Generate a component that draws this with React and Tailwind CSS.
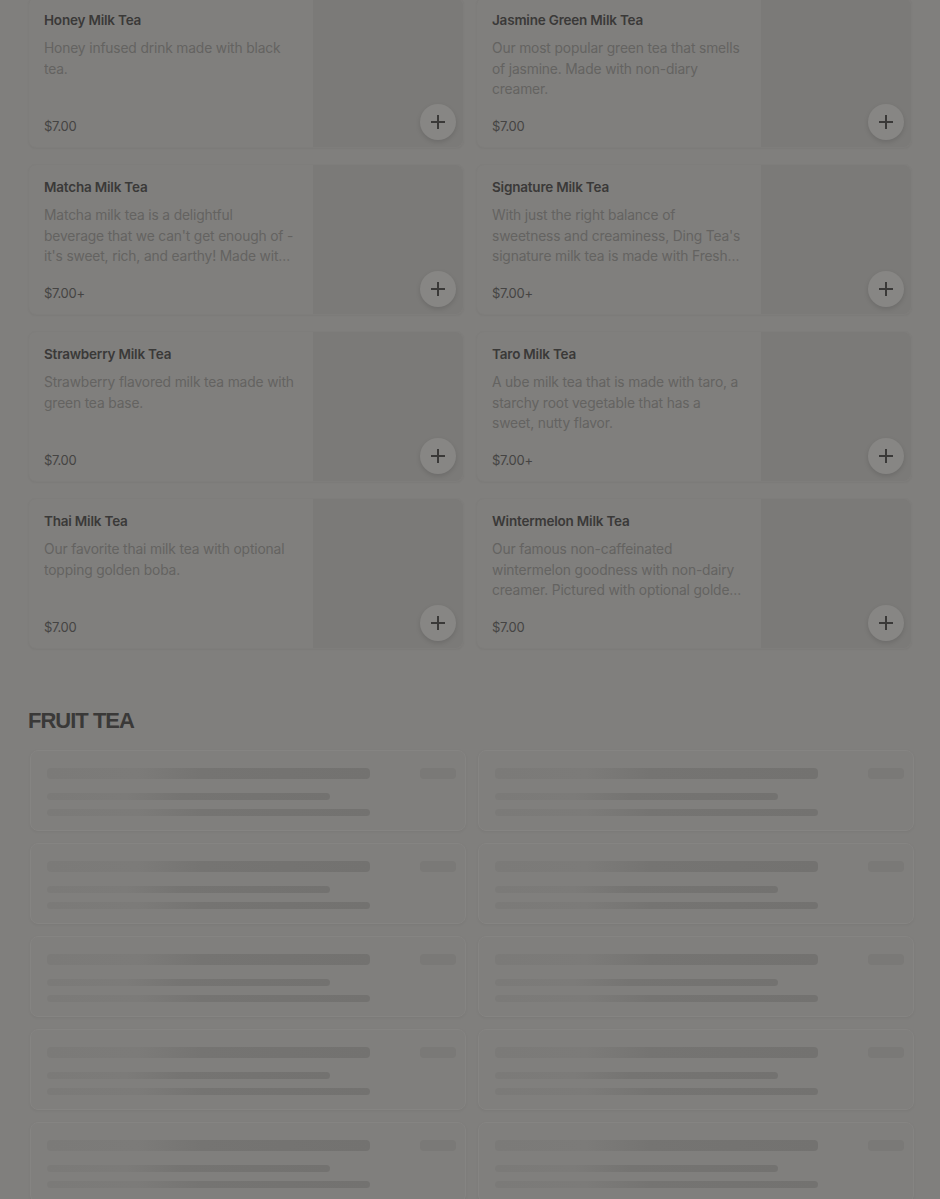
import React from "react";

const items = [
  { name: "Honey Milk Tea", desc: "Honey infused drink made with black tea.", price: "$7.00" },
  { name: "Jasmine Green Milk Tea", desc: "Our most popular green tea that smells of jasmine. Made with non-diary creamer.", price: "$7.00" },
  { name: "Matcha Milk Tea", desc: "Matcha milk tea is a delightful beverage that we can't get enough of - it's sweet, rich, and earthy! Made with non-dairy creamer.", price: "$7.00+" },
  { name: "Signature Milk Tea", desc: "With just the right balance of sweetness and creaminess, Ding Tea's signature milk tea is made with Fresh milk and black tea.", price: "$7.00+" },
  { name: "Strawberry Milk Tea", desc: "Strawberry flavored milk tea made with green tea base.", price: "$7.00" },
  { name: "Taro Milk Tea", desc: "A ube milk tea that is made with taro, a starchy root vegetable that has a sweet, nutty flavor.", price: "$7.00+" },
  { name: "Thai Milk Tea", desc: "Our favorite thai milk tea with optional topping golden boba.", price: "$7.00" },
  { name: "Wintermelon Milk Tea", desc: "Our famous non-caffeinated wintermelon goodness with non-dairy creamer. Pictured with optional golden boba.", price: "$7.00" },
];

function PlusIcon() {
  return (
    <svg width="16" height="16" viewBox="0 0 16 16" fill="none">
      <path d="M8 2v12M2 8h12" stroke="#3a3938" strokeWidth="2" strokeLinecap="square" />
    </svg>
  );
}

function ItemCard({ item }) {
  return (
    <div className="relative flex h-[151px] rounded-lg border border-[#7e7d7b] bg-[#807f7d] shadow-[0_1px_2px_rgba(0,0,0,0.04)]">
      <div className="flex min-w-0 flex-1 flex-col pl-[15px] pr-[18px] pt-[12px] pb-[11px]">
        <div className="text-[13.5px] font-semibold leading-5 text-[#3a3938] tracking-[-0.2px]">{item.name}</div>
        <div className="mt-[8px] line-clamp-3 overflow-hidden text-[13.8px] leading-[20.5px] text-[#646361] tracking-[-0.15px]">{item.desc}</div>
        <div className="mt-auto text-[13px] leading-5 text-[#454443] tracking-[-0.3px]">{item.price}</div>
      </div>
      <div className="w-[150px] shrink-0 rounded-r-lg bg-[#7b7a78]" />
      <button className="absolute bottom-[7px] right-[7px] flex h-9 w-9 items-center justify-center rounded-full bg-[#878684] shadow-[0_2px_5px_rgba(0,0,0,0.12)]">
        <PlusIcon />
      </button>
    </div>
  );
}

function Bar({ className }) {
  return (
    <div
      className={
        "rounded-sm bg-[linear-gradient(90deg,#7b7a78_0%,#7c7b79_28%,#757472_48%,#737270_100%)] " +
        className
      }
    />
  );
}

function SkeletonCard() {
  return (
    <div className="flex h-[81px] flex-col rounded-lg border border-[#858482] bg-[#807f7d] pl-4 pr-[9px] pt-[17px] shadow-[0_1px_3px_rgba(0,0,0,0.05)]">
      <div className="flex items-center">
        <Bar className="h-[11px] w-[323px]" />
        <div className="flex-1" />
        <div className="h-[11px] w-9 rounded-sm bg-[#7a7977]" />
      </div>
      <Bar className="mt-[14px] h-[7px] w-[283px]" />
      <Bar className="mt-[9px] h-[7px] w-[323px]" />
    </div>
  );
}

export default function App() {
  return (
    <div
      className="min-h-[1199px] overflow-hidden bg-[#807f7d]"
      style={{ fontFamily: "Inter, 'Noto Sans', sans-serif" }}
    >
      <div className="-mt-[3px] px-7">
        <div className="grid grid-cols-2 gap-x-3 gap-y-4">
          {items.map((it) => (
            <ItemCard key={it.name} item={it} />
          ))}
        </div>
        <h2 className="mt-[58px] text-[22px] font-bold uppercase leading-7 tracking-[-1px] text-[#3a3938]" style={{ fontFamily: "'Liberation Sans', Arial, sans-serif" }}>
          Fruit Tea
        </h2>
        <div className="mt-[15px] grid grid-cols-2 gap-x-3 gap-y-3 pl-[2px] -mr-[2px]">
          {Array.from({ length: 10 }).map((_, i) => (
            <SkeletonCard key={i} />
          ))}
        </div>
      </div>
    </div>
  );
}
